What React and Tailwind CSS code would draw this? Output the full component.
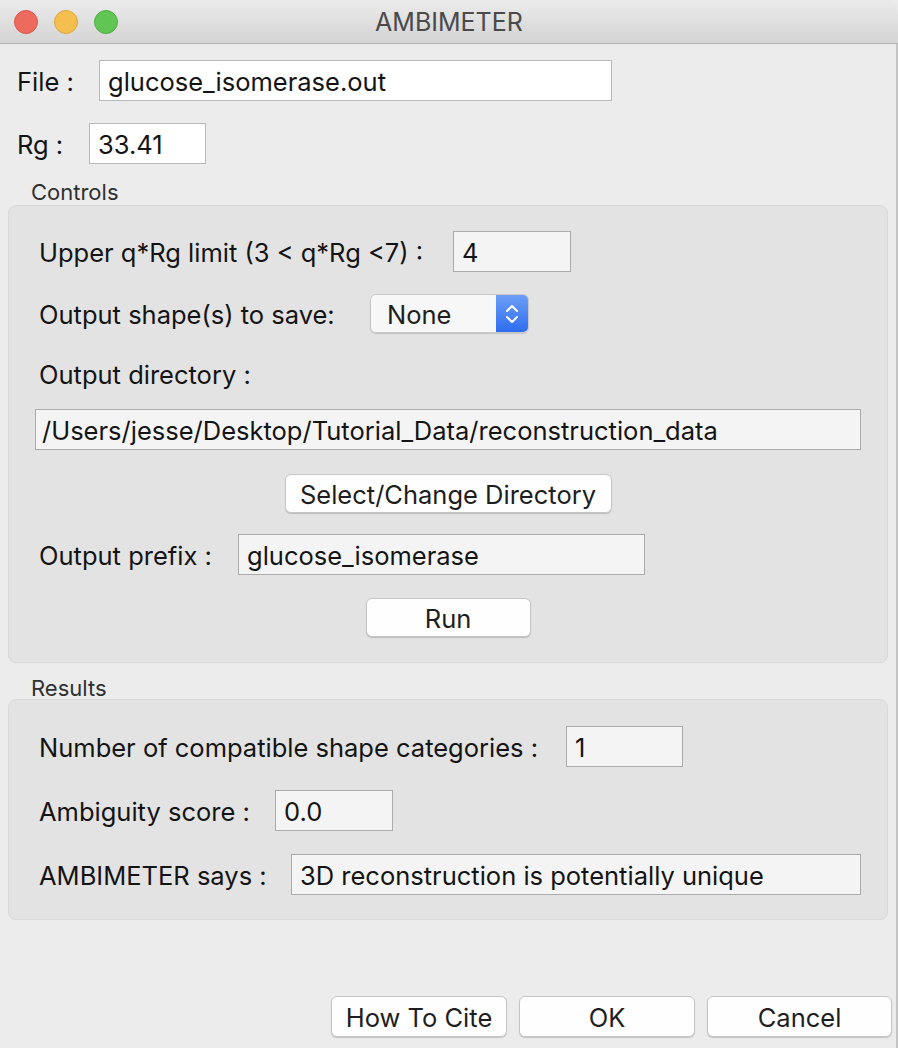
import React from "react";

const font = { fontFamily: "Inter, 'Liberation Sans', sans-serif" };

function Field({ value, className = "", white = false }) {
  return (
    <div
      className={`flex items-center border px-[8px] pt-[3px] text-[25.5px] leading-none text-[#141414] ${
        white ? "bg-white border-[#b8b8b8]" : "bg-[#f4f4f4] border-[#ababab]"
      } ${className}`}
    >
      <span className="whitespace-nowrap">{value}</span>
    </div>
  );
}

function Button({ children, className = "" }) {
  return (
    <div
      className={`flex items-center justify-center pt-[2px] rounded-[6px] border border-[#c6c6c6] bg-[#fefefe] text-[25.5px] leading-none text-[#1e1e1e] shadow-[0_1px_1px_rgba(0,0,0,0.18)] ${className}`}
    >
      {children}
    </div>
  );
}

function Label({ children, className = "" }) {
  return (
    <span className={`whitespace-nowrap pt-[3px] text-[25.5px] leading-none text-[#141414] ${className}`}>
      {children}
    </span>
  );
}

function Stepper() {
  return (
    <svg width="14" height="24" viewBox="0 0 14 24" fill="none">
      <path d="M2 9 L7 4 L12 9" stroke="white" strokeWidth="2" strokeLinecap="round" strokeLinejoin="round" />
      <path d="M2 15 L7 20 L12 15" stroke="white" strokeWidth="2" strokeLinecap="round" strokeLinejoin="round" />
    </svg>
  );
}

export default function App() {
  return (
    <div className="w-[898px] h-[1048px] flex flex-col bg-[#ececec] overflow-hidden" style={font}>
      {/* title bar */}
      <div className="relative h-[44px] shrink-0 flex items-center justify-center rounded-tr-[10px] border-b border-[#b4b4b4] bg-gradient-to-b from-[#ebebeb] to-[#d4d4d4]">
        <div className="absolute left-[14px] top-[10px] flex gap-[16px]">
          <div className="h-[24px] w-[24px] rounded-full bg-[#ed6a5e] border border-[#d8574b]" />
          <div className="h-[24px] w-[24px] rounded-full bg-[#f5bf4f] border border-[#dba53c]" />
          <div className="h-[24px] w-[24px] rounded-full bg-[#61c554] border border-[#50ad45]" />
        </div>
        <span className="pt-[2px] text-[25px] leading-none text-[#4a4a4a]">AMBIMETER</span>
      </div>

      {/* body */}
      <div className="flex-1 flex flex-col border-r-2 border-[#c4c4c4]">
        <div className="mt-[16px] flex items-center pl-[17px]">
          <Label className="w-[82px]">File :</Label>
          <Field white value="glucose_isomerase.out" className="w-[513px] h-[41px]" />
        </div>

        <div className="mt-[22px] flex items-center pl-[17px]">
          <Label className="w-[72px]">Rg :</Label>
          <Field white value="33.41" className="w-[117px] h-[41px]" />
        </div>

        <div className="mt-[14px] pl-[31px] pt-[2px] text-[22px] leading-[24px] text-[#303030]">Controls</div>

        {/* controls group */}
        <div className="mt-[1px] ml-[8px] w-[880px] h-[458px] rounded-[8px] border border-[#d9d9d9] bg-[#e3e3e3] flex flex-col">
          <div className="mt-[25px] flex items-center pl-[30px]">
            <Label className="w-[414px]">Upper q*Rg limit (3 &lt; q*Rg &lt;7) :</Label>
            <Field value="4" className="w-[118px] h-[41px]" />
          </div>

          <div className="mt-[22px] flex items-center pl-[30px]">
            <Label className="w-[331px]">Output shape(s) to save:</Label>
            <div className="flex h-[39px] w-[159px] rounded-[6px] border border-[#c8c8c8] shadow-[0_1px_1px_rgba(0,0,0,0.15)] overflow-hidden">
              <div className="flex-1 flex items-center pl-[16px] pt-[3px] bg-[#f7f7f7] text-[25.5px] leading-none text-[#1e1e1e]">None</div>
              <div className="w-[32px] flex items-center justify-center bg-gradient-to-b from-[#6d9ef6] to-[#2d6cf0]">
                <Stepper />
              </div>
            </div>
          </div>

          <div className="mt-[26px] pl-[30px] h-[28px] flex items-center">
            <Label>Output directory :</Label>
          </div>

          <Field
            value="/Users/jesse/Desktop/Tutorial_Data/reconstruction_data"
            className="mt-[22px] ml-[26px] w-[826px] h-[41px] !px-[6px]"
          />

          <div className="mt-[24px] flex justify-center">
            <Button className="w-[327px] h-[39px]">Select/Change Directory</Button>
          </div>

          <div className="mt-[21px] flex items-center pl-[30px]">
            <Label className="w-[199px]">Output prefix :</Label>
            <Field value="glucose_isomerase" className="w-[407px] h-[41px]" />
          </div>

          <div className="mt-[23px] flex justify-center">
            <Button className="w-[165px] h-[39px]">Run</Button>
          </div>
        </div>

        <div className="mt-[11px] pl-[31px] pt-[2px] text-[22px] leading-[24px] text-[#303030]">Results</div>

        {/* results group */}
        <div className="mt-[-1px] ml-[8px] w-[880px] h-[221px] rounded-[8px] border border-[#d9d9d9] bg-[#e3e3e3] flex flex-col">
          <div className="mt-[26px] flex items-center pl-[30px]">
            <Label className="w-[527px]">Number of compatible shape categories :</Label>
            <Field value="1" className="w-[117px] h-[41px]" />
          </div>
          <div className="mt-[23px] flex items-center pl-[30px]">
            <Label className="w-[236px]">Ambiguity score :</Label>
            <Field value="0.0" className="w-[118px] h-[41px]" />
          </div>
          <div className="mt-[23px] flex items-center pl-[30px]">
            <Label className="w-[252px]">AMBIMETER says :</Label>
            <Field value="3D reconstruction is potentially unique" className="w-[570px] h-[41px]" />
          </div>
        </div>

        <div className="mt-auto mb-[11px] flex justify-end gap-[12px] pr-[4px]">
          <Button className="w-[176px] h-[41px]">How To Cite</Button>
          <Button className="w-[176px] h-[41px]">OK</Button>
          <Button className="w-[185px] h-[41px]">Cancel</Button>
        </div>
      </div>
    </div>
  );
}
